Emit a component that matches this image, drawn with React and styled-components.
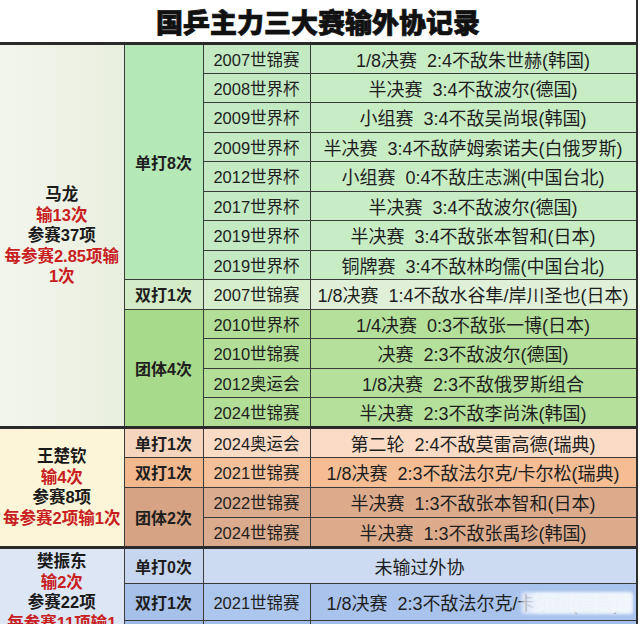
import React from "react";
import styled, { createGlobalStyle, css } from "styled-components";

const GlobalStyle = createGlobalStyle`
  html, body { margin: 0; padding: 0; background: #ffffff; }
  body { font-family: "Liberation Sans", "Noto Sans CJK SC", sans-serif; color: #1c1c1c; }
`;

const Board = styled.div`
  width: 638px;
  box-sizing: border-box;
  border-right: 2px solid #2e2e2e;
  background: #ffffff;
  overflow: hidden;
`;

const Title = styled.h1`
  margin: 0;
  height: 42px;
  display: flex;
  align-items: center;
  justify-content: center;
  font-family: "Noto Sans CJK SC", sans-serif;
  font-weight: 900;
  font-size: 27px;
  color: #111111;
  -webkit-text-stroke: 0.7px #111111;
`;

const Table = styled.table`
  width: 636px;
  border-collapse: collapse;
  table-layout: fixed;
  border-top: 3px solid #2a2a2a;
`;

const Row = styled.tr`
  height: ${(p) => p.$h}px;
  ${(p) =>
    p.$first &&
    css`
      & > td {
        border-top: 3px solid #2a2a2a;
      }
    `}
`;

const Cell = styled.td`
  border: 1px solid #3a3a3a;
  padding: 0;
  text-align: center;
  vertical-align: middle;
  white-space: nowrap;
  overflow: hidden;
  background: ${(p) => p.$bg};
`;

const NameCell = styled(Cell)`
  border-left: none;
  padding: 2px 0;
`;

const NameLine = styled.div`
  font-size: 16.5px;
  line-height: 20.5px;
  font-weight: 700;
  color: ${(p) => (p.$red ? "#c8201f" : "#1a1a1a")};
`;

const CatCell = styled(Cell)`
  font-size: 16px;
  font-weight: 700;
  color: #1e1e1e;
`;

const YearCell = styled(Cell)`
  font-size: 16.5px;
  color: #1e1e1e;
`;

const ResultCell = styled(Cell)`
  position: relative;
  font-size: 18px;
  word-spacing: 5px;
  color: #1e1e1e;
`;

const Watermark = styled.span`
  position: absolute;
  right: 3px;
  top: 8px;
  width: 112px;
  height: 22px;
  border-radius: 3px;
  background: linear-gradient(
    90deg,
    rgba(238, 243, 252, 0.6) 0%,
    rgba(240, 245, 253, 0.98) 14%,
    rgba(243, 247, 253, 0.98) 100%
  );
  filter: blur(1.5px);
`;

const data = [
  {
    name: [
      { t: "马龙" },
      { t: "输13次", red: true },
      { t: "参赛37项" },
      { t: "每参赛2.85项输", red: true },
      { t: "1次", red: true },
    ],
    nameBg: "linear-gradient(90deg, #f2f5ec, #e9efdf)",
    h: 29.5,
    groups: [
      {
        cat: "单打8次",
        catBg: "#b4e8b6",
        yearBg: "#c4eac3",
        resBg: "#c8edc5",
        rows: [
          ["2007世锦赛", "1/8决赛 2:4不敌朱世赫(韩国)"],
          ["2008世界杯", "半决赛 3:4不敌波尔(德国)"],
          ["2009世界杯", "小组赛 3:4不敌吴尚垠(韩国)"],
          ["2009世界杯", "半决赛 3:4不敌萨姆索诺夫(白俄罗斯)"],
          ["2012世界杯", "小组赛 0:4不敌庄志渊(中国台北)"],
          ["2017世界杯", "半决赛 3:4不敌波尔(德国)"],
          ["2019世界杯", "半决赛 3:4不敌张本智和(日本)"],
          ["2019世界杯", "铜牌赛 3:4不敌林昀儒(中国台北)"],
        ],
      },
      {
        cat: "双打1次",
        catBg: "#d3ecc7",
        yearBg: "#d6eecc",
        resBg: "#e0f0d8",
        rows: [["2007世锦赛", "1/8决赛 1:4不敌水谷隼/岸川圣也(日本)"]],
      },
      {
        cat: "团体4次",
        catBg: "#a8da8c",
        yearBg: "#b2de97",
        resBg: "#b5e09b",
        rows: [
          ["2010世界杯", "1/4决赛 0:3不敌张一博(日本)"],
          ["2010世锦赛", "决赛 2:3不敌波尔(德国)"],
          ["2012奥运会", "1/8决赛 2:3不敌俄罗斯组合"],
          ["2024世锦赛", "半决赛 2:3不敌李尚洙(韩国)"],
        ],
      },
    ],
  },
  {
    name: [
      { t: "王楚钦" },
      { t: "输4次", red: true },
      { t: "参赛8项" },
      { t: "每参赛2项输1次", red: true },
    ],
    nameBg: "#fcf5d8",
    h: 30,
    groups: [
      {
        cat: "单打1次",
        catBg: "#f6d5be",
        yearBg: "#f9dbc6",
        resBg: "#fadcc6",
        rows: [["2024奥运会", "第二轮 2:4不敌莫雷高德(瑞典)"]],
      },
      {
        cat: "双打1次",
        catBg: "#f1b78d",
        yearBg: "#f4c09a",
        resBg: "#f4bd94",
        rows: [["2021世锦赛", "1/8决赛 2:3不敌法尔克/卡尔松(瑞典)"]],
      },
      {
        cat: "团体2次",
        catBg: "#d6a384",
        yearBg: "#dbab8d",
        resBg: "#dcab8c",
        rows: [
          ["2022世锦赛", "半决赛 1:3不敌张本智和(日本)"],
          ["2024世锦赛", "半决赛 1:3不敌张禹珍(韩国)"],
        ],
      },
    ],
  },
  {
    name: [
      { t: "樊振东" },
      { t: "输2次", red: true },
      { t: "参赛22项" },
      { t: "每参赛11项输1", red: true },
      { t: "次", red: true },
    ],
    nameBg: "#dde6f5",
    h: 36.5,
    groups: [
      {
        cat: "单打0次",
        catBg: "#c6d6ef",
        yearBg: "#cddbf2",
        resBg: "#cddbf2",
        rows: [[null, "未输过外协"]],
      },
      {
        cat: "双打1次",
        catBg: "#a6c0ea",
        yearBg: "#adc6ed",
        resBg: "#a9c3ec",
        mark: true,
        rows: [["2021世锦赛", "1/8决赛 2:3不敌法尔克/卡尔松(瑞典)"]],
      },
      {
        cat: "团体1次",
        catBg: "#9cb8e4",
        yearBg: "#a3bee8",
        resBg: "#a3bee8",
        rows: [["", ""]],
      },
    ],
  },
];

function Section({ s }) {
  const total = s.groups.reduce((n, g) => n + g.rows.length, 0);
  const rows = [];
  s.groups.forEach((g, gi) => {
    g.rows.forEach(([year, result], ri) => {
      const first = gi === 0 && ri === 0;
      rows.push(
        <Row key={`${gi}-${ri}`} $h={s.h} $first={first}>
          {first && (
            <NameCell rowSpan={total} $bg={s.nameBg}>
              {s.name.map((l, i) => (
                <NameLine key={i} $red={l.red}>
                  {l.t}
                </NameLine>
              ))}
            </NameCell>
          )}
          {ri === 0 && (
            <CatCell rowSpan={g.rows.length} $bg={g.catBg}>
              {g.cat}
            </CatCell>
          )}
          {year === null ? (
            <ResultCell colSpan={2} $bg={g.resBg}>
              {result}
            </ResultCell>
          ) : (
            <>
              <YearCell $bg={g.yearBg}>{year}</YearCell>
              <ResultCell $bg={g.resBg}>
                {result}
                {g.mark && <Watermark />}
              </ResultCell>
            </>
          )}
        </Row>
      );
    });
  });
  return <>{rows}</>;
}

export default function App() {
  return (
    <>
      <GlobalStyle />
      <Board>
        <Title>国乒主力三大赛输外协记录</Title>
        <Table>
          <colgroup>
            <col style={{ width: 124 }} />
            <col style={{ width: 79 }} />
            <col style={{ width: 107 }} />
            <col style={{ width: 326 }} />
          </colgroup>
          <tbody>
            {data.map((s, i) => (
              <Section key={i} s={s} />
            ))}
          </tbody>
        </Table>
      </Board>
    </>
  );
}
